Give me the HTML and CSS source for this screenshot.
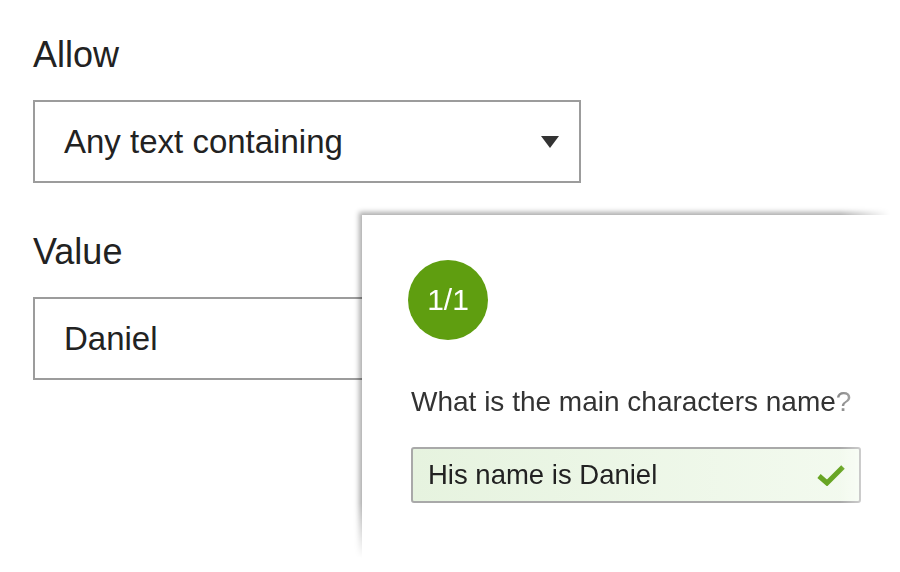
FILE: index.html
```html
<!DOCTYPE html>
<html lang="en">
<head>
<meta charset="utf-8">
<title>Validation</title>
<link rel="stylesheet" href="styles.css">
</head>
<body>
<div class="form">
  <div class="label">Allow</div>
  <div class="field select">
    <span class="field-text">Any text containing</span>
    <span class="caret"></span>
  </div>
  <div class="label label-second">Value</div>
  <div class="field">
    <span class="field-text">Daniel</span>
  </div>
</div>

<div class="popup-wrap">
  <div class="popup">
    <div class="badge">1/1</div>
    <div class="question">What is the main characters name<span class="qmark">?</span></div>
    <div class="answer">
      <span class="answer-text">His name is Daniel</span>
      <svg class="check" width="28" height="22" viewBox="0 0 28 22" aria-hidden="true">
        <path d="M2 12 L10 19 L26 3" fill="none" stroke="#68a524" stroke-width="5" stroke-linejoin="miter"/>
      </svg>
    </div>
  </div>
</div>
</body>
</html>
```

FILE: styles.css
```css
html, body {
  margin: 0;
  padding: 0;
  background: #ffffff;
}

body {
  width: 900px;
  height: 572px;
  overflow: hidden;
  position: relative;
  font-family: "Liberation Sans", Arial, Helvetica, sans-serif;
  color: #222222;
}

.form {
  padding: 35px 0 0 33px;
  width: 548px;
}

.label {
  font-size: 36px;
  line-height: 40px;
  height: 40px;
  margin-bottom: 25px;
  color: #222222;
}

.label-second {
  margin-top: 49px;
}

.field {
  box-sizing: border-box;
  height: 83px;
  border: 2px solid #9c9c9c;
  display: flex;
  align-items: center;
  padding: 0 20px 0 29px;
}

.field-text {
  font-size: 33px;
  line-height: 36px;
  color: #222222;
  flex: 1;
}

.caret {
  width: 0;
  height: 0;
  border-left: 9px solid transparent;
  border-right: 9px solid transparent;
  border-top: 12px solid #333333;
}

.popup-wrap {
  position: absolute;
  left: 350px;
  top: 203px;
  width: 550px;
  height: 369px;
  overflow: hidden;
  padding: 12px 0 0 12px;
  box-sizing: border-box;
  -webkit-mask-image: linear-gradient(to right, #000 0, #000 490px, transparent 540px), linear-gradient(to bottom, #000 0, #000 300px, transparent 355px);
  -webkit-mask-composite: source-in;
  mask-image: linear-gradient(to right, #000 0, #000 490px, transparent 540px), linear-gradient(to bottom, #000 0, #000 300px, transparent 355px);
  mask-composite: intersect;
}

.popup {
  background: #ffffff;
  height: 100%;
  box-shadow: -3px -3px 5px rgba(0, 0, 0, 0.32);
  padding: 45px 0 0 46px;
  box-sizing: border-box;
}

.badge {
  width: 80px;
  height: 80px;
  border-radius: 50%;
  background: #5f9e10;
  color: #ffffff;
  font-size: 30px;
  display: flex;
  align-items: center;
  justify-content: center;
}

.question {
  margin-top: 46px;
  margin-left: 3px;
  font-size: 28px;
  line-height: 32px;
  color: #333333;
}

.qmark {
  color: #8a8a8a;
}

.answer {
  margin-top: 29px;
  margin-left: 3px;
  box-sizing: border-box;
  width: 450px;
  height: 56px;
  border: 2px solid #a9a9a9;
  border-radius: 3px;
  background: linear-gradient(to right, #e6f3df, #f3faef);
  display: flex;
  align-items: center;
  padding: 0 14px 0 15px;
}

.answer-text {
  flex: 1;
  font-size: 27.5px;
  line-height: 32px;
  color: #222222;
}

.check {
  display: block;
}
```
